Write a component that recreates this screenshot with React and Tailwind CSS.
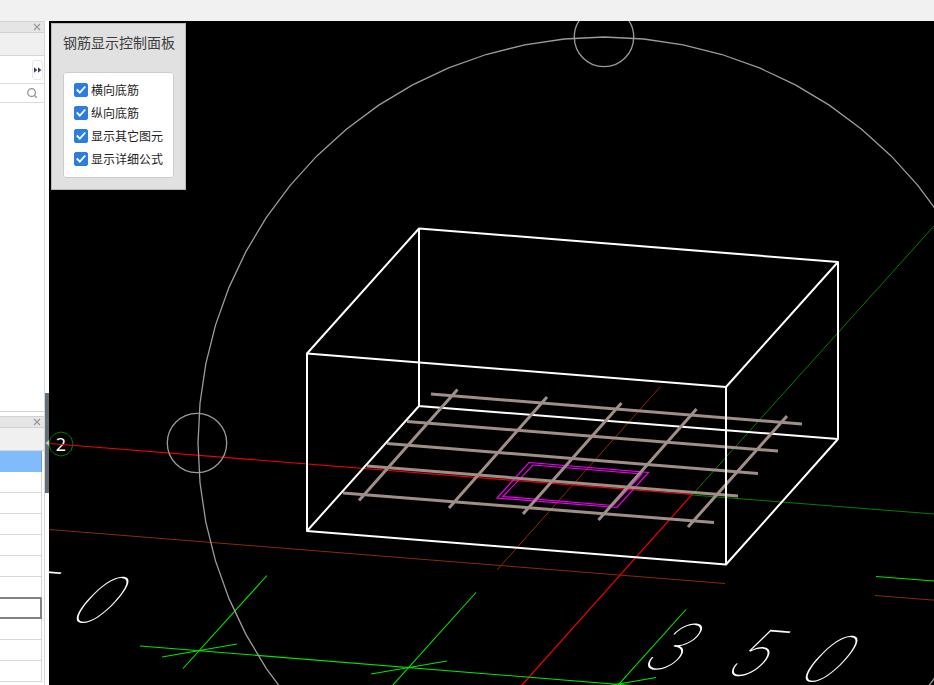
import React from "react";

const OPTIONS = [
  ["bottom-x", "横向底筋"],
  ["bottom-y", "纵向底筋"],
  ["others", "显示其它图元"],
  ["formula", "显示详细公式"],
];

const ORBIT_POINTS = Array.from({ length: 64 }, (_, i) => {
  const a = (i * Math.PI) / 32;
  return `${(604 + 406 * Math.sin(a)).toFixed(1)},${(443 - 406 * Math.cos(a)).toFixed(1)}`;
}).join(" ");

const BUBBLE_POINTS = Array.from({ length: 12 }, (_, i) => {
  const a = (i * Math.PI) / 6;
  return `${(61 + 12 * Math.sin(a)).toFixed(1)},${(444 - 12 * Math.cos(a)).toFixed(1)}`;
}).join(" ");

function CloseButton() {
  return (
    <button type="button" aria-label="关闭" className="flex h-3 w-3 items-center justify-center">
      <svg width="8" height="8" viewBox="0 0 8 8" stroke="#969696" strokeWidth="1.1">
        <path d="M1 1l6 6M7 1l-6 6" />
      </svg>
    </button>
  );
}

function PaneHeader() {
  return (
    <div className="flex h-3 shrink-0 items-center justify-end border-y border-[#d2d2d2] bg-[#e5e5e5] pr-px">
      <CloseButton />
    </div>
  );
}

function SideBar() {
  return (
    <aside className="flex w-[45px] shrink-0 flex-col overflow-hidden border-r border-[#d7d7d7] bg-white">
      <section className="flex h-[391px] shrink-0 flex-col border-b border-[#d2d2d2]">
        <PaneHeader />
        <div className="h-[23px] shrink-0 border-b border-[#d7d7d7] bg-[#f0f0f0]" />
        <div className="flex h-7 shrink-0 items-center justify-end border-b border-[#dcdcdc] pr-px">
          <button
            type="button"
            aria-label="更多"
            className="flex h-5 w-[11px] items-center justify-center rounded-[3px] border border-[#e6e6e6]"
          >
            <svg className="shrink-0" width="8" height="6" viewBox="0 0 8 6" fill="#3c4158">
              <path d="M0 .3L3.300 3 0 5.700zM4 .3L7.300 3 4 5.700z" />
            </svg>
          </button>
        </div>
        <div className="flex h-[19px] shrink-0 items-center justify-end border-b border-[#dcdcdc] pr-[7px]">
          <button type="button" aria-label="搜索">
            <svg width="10" height="10" viewBox="0 0 10 10" fill="none" stroke="#969696" strokeWidth="1.3">
              <circle cx="4.6" cy="4.6" r="3.9" />
              <path d="M7.3 7.3L9.700 9.700" />
            </svg>
          </button>
        </div>
      </section>
      <div className="h-1 shrink-0" />
      <section className="flex min-h-0 grow flex-col">
        <PaneHeader />
        <div className="h-[23px] shrink-0 border-b border-[#d7d7d7] bg-[#f0f0f0]" />
        <table className="w-[42px] border-separate border-spacing-0">
          <tbody>
            <tr className="h-[21px] bg-[#80bcfc]">
              <td className="border-r border-[#5f9fe0] p-0" />
            </tr>
            {[1, 2, 3, 4, 5].map((n) => (
              <tr key={n} className="h-[21px]">
                <td className="border-r border-b border-[#d7d7d7] p-0" />
              </tr>
            ))}
            <tr className="h-[21px]">
              <td className="border-r border-b border-r-[#d7d7d7] border-b-[#828282] p-0" />
            </tr>
            <tr className="h-[21px]">
              <td className="border-t border-r-2 border-b-2 border-[#828282] p-0" />
            </tr>
            {[1, 2, 3].map((n) => (
              <tr key={n} className="h-[21px]">
                <td className="border-r border-b border-[#d7d7d7] p-0" />
              </tr>
            ))}
          </tbody>
        </table>
      </section>
    </aside>
  );
}

function Splitter() {
  return (
    <div className="flex w-1 shrink-0 flex-col bg-white pt-[372px]">
      <button type="button" aria-label="折叠" className="flex h-[100px] w-1 items-center bg-[#646e78]">
        <svg width="4" height="6" viewBox="0 0 4 6" fill="#c8c8c8">
          <path d="M4 0v6L.5 3z" />
        </svg>
      </button>
    </div>
  );
}

function DimensionText({ x, y }) {
  return (
    <text
      transform={`matrix(1 0.08 -0.9 1 ${x} ${y})`}
      x="8 92 164"
      y="0"
      className="font-['Inter',sans-serif] text-[62px] font-thin"
      fill="#fff"
    >
      350
    </text>
  );
}

function Scene() {
  return (
    <svg className="block h-full w-full bg-black" fill="none" aria-label="三维视图">
      <g transform="translate(-49 -21)">
        <g stroke="#8c2a08" strokeWidth="1">
          <path d="M49 529.5L725 583.5M660 387L497 570M875 595.5L1400 637" />
        </g>
        <g stroke="#008000" strokeWidth="1">
          <path d="M692 495L934 226L1200 -70M692 495L1400 550.6" />
          <polygon points={BUBBLE_POINTS} />
        </g>
        <text
          x="61"
          y="451"
          textAnchor="middle"
          className="font-['Open_Sans',sans-serif] text-[18px]"
          fill="#fff"
        >
          2
        </text>
        <path stroke="#f00000" strokeWidth="1.2" d="M49 443.5L692 494.5L522 685L400 821" />
        <g stroke="#00e600" strokeWidth="1.1">
          <path d="M140 646L632 685.5M162 657L237 644M371 674L447 661M610 685.5L656 677.5" />
          <path d="M267 575.5L183 668.5M476 592.5L392 686M686 609.5L602 703M876 576.5L1400 617" />
        </g>
        <DimensionText x={629} y={667} />
        <DimensionText x={-100} y={608} />
        <g stroke="#9b9b9b" strokeWidth="1.3">
          <polygon points={ORBIT_POINTS} />
          <circle cx="604" cy="37" r="29.7" />
          <circle cx="197" cy="443" r="29.7" />
        </g>
        <g stroke="#fff" strokeWidth="2">
          <path d="M419 228V406L838 439" />
        </g>
        <g stroke="#f000f0" strokeWidth="1.2">
          <path d="M529 462.5L648.5 472.5L617 507.5L497 498z" />
          <path d="M533 465L642 474L613 505.5L503 496.5z" />
        </g>
        <g stroke="#a08e88" strokeWidth="3">
          <path d="M431 394L802 424M407 421.5L778 451M387 443.5L758 473.5M367 466L738 496M343 493L714 522.5" />
          <path d="M457.500 389.500L359 500.500M547 397L449 508M621.500 403L523 514M696.500 409L598.500 520M787 416L688 527" />
        </g>
        <g stroke="#fff" strokeWidth="2" strokeLinejoin="round">
          <path d="M307 353.500L419 228.500L838 262L726 387z" />
          <path d="M307 353V531L726 564.500V387M838 262V439L726 564.500M307 531L419 406" />
        </g>
      </g>
    </svg>
  );
}

function ControlPanel() {
  return (
    <form className="absolute top-[2px] left-[2px] w-[135px] border border-[#b9b9b9] bg-[#e1e1e1] px-[11px] pb-[11px] font-['Noto_Sans_CJK_SC',sans-serif] text-[#3c3c3c]">
      <h2 className="flex h-[48px] items-center pb-3 text-[14px] leading-[20px] whitespace-nowrap">
        钢筋显示控制面板
      </h2>
      <fieldset className="flex flex-col rounded-[3px] border border-[#cdcdcd] bg-white pt-[5px] pb-[7px] pl-[10px]">
        {OPTIONS.map(([id, label]) => (
          <div key={id} className="flex h-[23px] items-center gap-[3px]">
            <span className="grid h-[14px] w-[14px] shrink-0">
              <input
                id={id}
                type="checkbox"
                defaultChecked
                className="peer col-start-1 row-start-1 h-[14px] w-[14px] appearance-none rounded-[2px] border border-[#969696] bg-white checked:border-[#2b7de1] checked:bg-[#2b7de1]"
              />
              <svg
                className="pointer-events-none invisible col-start-1 row-start-1 peer-checked:visible"
                width="14"
                height="14"
                viewBox="0 0 14 14"
                fill="none"
                stroke="#fff"
                strokeWidth="1.8"
              >
                <path d="M2.800 6.500L5.800 9.600L11.300 3.500" />
              </svg>
            </span>
            <label htmlFor={id} className="text-[12px] leading-[18px] whitespace-nowrap text-[#1e1e1e]">
              {label}
            </label>
          </div>
        ))}
      </fieldset>
    </form>
  );
}

export default function App() {
  return (
    <div className="flex h-screen flex-col overflow-hidden bg-[#f1f1f1]">
      <header className="h-[21px] shrink-0 bg-[#f1f1f1]" />
      <div className="flex min-h-0 grow">
        <SideBar />
        <Splitter />
        <main className="relative min-w-0 grow overflow-hidden">
          <Scene />
          <ControlPanel />
        </main>
      </div>
    </div>
  );
}
